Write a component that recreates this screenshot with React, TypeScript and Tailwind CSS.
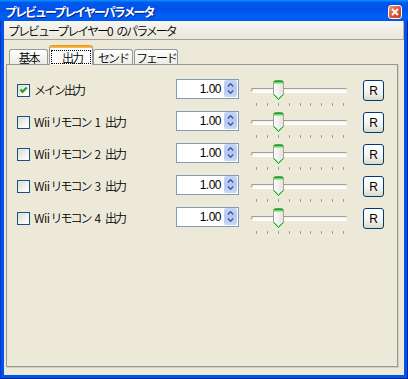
import React from "react";

type Part = [string, boolean];

const rows: { parts: Part[]; checked: boolean }[] = [
  { parts: [["メイン出力", true]], checked: true },
  { parts: [["Wii", false], ["リモコン", true], ["1", false], ["出力", true]], checked: false },
  { parts: [["Wii", false], ["リモコン", true], ["2", false], ["出力", true]], checked: false },
  { parts: [["Wii", false], ["リモコン", true], ["3", false], ["出力", true]], checked: false },
  { parts: [["Wii", false], ["リモコン", true], ["4", false], ["出力", true]], checked: false },
];

function Label({ parts }: { parts: Part[] }) {
  return (
    <span className="text-[12px] leading-[14px] text-black whitespace-pre font-[350]">
      {parts.map(([t, jp], i) => (
        <span
          key={i}
          className={
            jp
              ? "tracking-[-2px]"
              : t === "Wii"
              ? "tracking-[-0.5px] pr-[1px]"
              : "tracking-normal px-[4px]"
          }
        >
          {t}
        </span>
      ))}
    </span>
  );
}

function Checkbox({ checked }: { checked: boolean }) {
  return (
    <div className="w-[13px] h-[13px] border border-[#1C5180] bg-[linear-gradient(135deg,#DCDBD5_0%,#F4F4F0_60%,#FFFFFF_100%)] flex items-center justify-center shrink-0">
      {checked && (
        <svg width="9" height="9" viewBox="0 0 9 9">
          <path d="M1.5 3.5 L3.5 5.8 L7.8 1.5" stroke="#21A121" strokeWidth="2.2" fill="none" />
        </svg>
      )}
    </div>
  );
}

function Spin() {
  return (
    <div className="w-[63px] h-[20px] border border-[#7F9DB9] bg-white flex items-start shrink-0">
      <span className="flex-1 text-right pr-[3px] pt-[2px] text-[12px] leading-[14px] tracking-[-0.5px] font-['Liberation_Sans',sans-serif] text-black">
        1.00
      </span>
      <div className="w-[13px] h-[17px] mt-[0px] mr-[1px] rounded-[2px] bg-[linear-gradient(to_bottom,#C6D5FA,#B4C8F5_50%,#C9D7FB)] flex flex-col items-center justify-center gap-[3px]">
        <svg width="7" height="4" viewBox="0 0 7 4">
          <path d="M0.8 3.5 L3.5 0.8 L6.2 3.5" stroke="#4D6185" strokeWidth="1.6" fill="none" />
        </svg>
        <svg width="7" height="4" viewBox="0 0 7 4">
          <path d="M0.8 0.5 L3.5 3.2 L6.2 0.5" stroke="#4D6185" strokeWidth="1.6" fill="none" />
        </svg>
      </div>
    </div>
  );
}

function Thumb() {
  return (
    <svg width="11" height="20" viewBox="0 0 11 20">
      <defs>
        <linearGradient id="thumbg" x1="0" x2="1" y1="0" y2="0">
          <stop offset="0" stopColor="#FFFFFF" />
          <stop offset="1" stopColor="#E2E1D9" />
        </linearGradient>
      </defs>
      <path
        d="M0.5 2.5 Q0.5 0.5 2.5 0.5 H8.5 Q10.5 0.5 10.5 2.5 V14.5 L5.5 19.5 L0.5 14.5 Z"
        fill="url(#thumbg)"
        stroke="#A3A39B"
      />
      <path d="M0.5 3 Q0.5 0.5 2.5 0.5 H8.5 Q10.5 0.5 10.5 3 Z" fill="#21A121" />
      <rect x="1" y="2" width="9" height="1.5" fill="#6BD86B" />
      <path d="M0.5 14.5 L5.5 19.5 L10.5 14.5" fill="none" stroke="#21A121" />
      <path d="M1.5 14.5 L5.5 18.5 L9.5 14.5" fill="none" stroke="#7BD87B" />
    </svg>
  );
}

function Slider() {
  const ticks = [0, 1, 2, 3, 4, 5, 6, 7, 8];
  return (
    <div className="relative w-[98px] h-[32px] shrink-0">
      <div className="absolute left-[1px] right-[1px] top-[9px] h-[4px] rounded-[2px] border-t border-l border-[#9D9C99] bg-[linear-gradient(to_bottom,#F2F1EC,#FFFFFF)] shadow-[0_1px_0_#FFFFFF]" />
      <div className="absolute left-[23px] top-[1px]">
        <Thumb />
      </div>
      <div className="absolute left-[6px] top-[24px] w-[88px] h-[3px] flex justify-between">
        {ticks.map((t) => (
          <div key={t} className="w-[1px] h-[3px] bg-[#A1A192]" />
        ))}
      </div>
    </div>
  );
}

function RButton() {
  return (
    <div className="ml-[15px] mt-[1px] w-[21px] h-[21px] rounded-[3px] border border-[#003C74] bg-[linear-gradient(to_bottom,#FFFFFF,#F4F3EE_60%,#DDD9CD)] flex items-center justify-center shrink-0 text-[12px] leading-[12px] font-['Liberation_Sans',sans-serif] text-black">
      R
    </div>
  );
}

export default function App() {
  return (
    <div className="w-[408px] h-[379px] flex flex-col bg-[#0055E5] shadow-[inset_1px_0_0_#0831D9,inset_-1px_0_0_#001EA0,inset_0_-1px_0_#001EA0] font-['Noto_Sans_CJK_JP',sans-serif] overflow-hidden">
      {/* title bar */}
      <div className="h-[21px] shrink-0 flex items-start justify-between bg-[linear-gradient(to_bottom,#0997FF_0%,#0058EE_12%,#0052EA_45%,#0060F8_85%,#0055E8_100%)]">
        <span className="pl-[5px] pt-[5px] text-[12px] leading-[13px] font-bold text-white tracking-[-2px] [text-shadow:1px_1px_0_#0A1E8A]">
          プレビュープレイヤーパラメータ
        </span>
        <div className="mt-[5px] mr-[6px] w-[14px] h-[14px] rounded-[3px] border border-white bg-[linear-gradient(135deg,#F09A7C,#E0562C_50%,#C2401A)] flex items-center justify-center">
          <svg width="8" height="8" viewBox="0 0 8 8">
            <path d="M1 1 L7 7 M7 1 L1 7" stroke="#FFFFFF" strokeWidth="2" />
          </svg>
        </div>
      </div>
      {/* body */}
      <div className="flex-1 mx-[4px] mb-[4px] bg-[#ECE9D8] flex flex-col">
        <div className="h-[19px] shrink-0 border-b border-[#A5A294] border-r border-r-[#B8B5A6] bg-[linear-gradient(to_bottom,#F7F6F1,#EAE7DB)] pl-[4px] pt-[3px] text-[12px] leading-[14px] text-black font-[350]">
          <span className="tracking-[-2px]">プレビュープレイヤー</span>
          <span className="tracking-normal">0 </span>
          <span className="tracking-[-2px]">のパラメータ</span>
        </div>
        {/* tabs */}
        <div className="mt-[5px] ml-[5px] h-[20px] shrink-0 flex items-start relative z-10 font-[350]">
          <div className="mt-[4px] w-[39px] h-[15px] border border-b-0 border-[#919B9C] rounded-t-[3px] bg-[linear-gradient(to_bottom,#FFFFFF,#F3F2EC_60%,#ECEBE5)] flex items-start justify-center pt-[1px] text-[12px] leading-[13px] text-black">
            <span className="tracking-[-2px]">基本</span>
          </div>
          <div className="ml-[1px] w-[44px] h-[20px] border-x border-[#919B9C] rounded-t-[3px] bg-[#FCFCFE] flex flex-col overflow-hidden">
            <div className="h-[3px] shrink-0 bg-[linear-gradient(to_bottom,#E68B2C,#FFC73C)]" />
            <div className="mt-[2px] mx-[1px] h-[14px] border border-dotted border-black flex items-start justify-center text-[12px] leading-[13px] text-black">
              <span className="tracking-[-2px] pl-[2px]">出力</span>
            </div>
          </div>
          <div className="mt-[4px] w-[40px] h-[15px] border border-b-0 border-[#919B9C] rounded-t-[3px] bg-[linear-gradient(to_bottom,#FFFFFF,#F3F2EC_60%,#ECEBE5)] flex items-start justify-center pt-[1px] text-[12px] leading-[13px] text-black">
            <span className="tracking-[-2px]">センド</span>
          </div>
          <div className="mt-[4px] ml-[1px] w-[44px] h-[15px] border border-b-0 border-[#919B9C] rounded-t-[3px] bg-[linear-gradient(to_bottom,#FFFFFF,#F3F2EC_60%,#ECEBE5)] flex items-start justify-center pt-[1px] text-[12px] leading-[13px] text-black">
            <span className="tracking-[-2px]">フェード</span>
          </div>
        </div>
        {/* panel */}
        <div className="-mt-[1px] ml-[2px] w-[392px] h-[303px] shrink-0 border border-[#919B9C] bg-[#ECE9D8] shadow-[1px_1px_0_#D4D0C0] flex flex-col pt-[14px] pl-[10px]">
          {rows.map((r, i) => (
            <div key={i} className="h-[32px] flex items-start">
              <div className="w-[159px] shrink-0 mt-[4px] flex items-center gap-[4px]">
                <Checkbox checked={r.checked} />
                <Label parts={r.parts} />
              </div>
              <Spin />
              <div className="ml-[11px]">
                <Slider />
              </div>
              <RButton />
            </div>
          ))}
        </div>
      </div>
    </div>
  );
}
